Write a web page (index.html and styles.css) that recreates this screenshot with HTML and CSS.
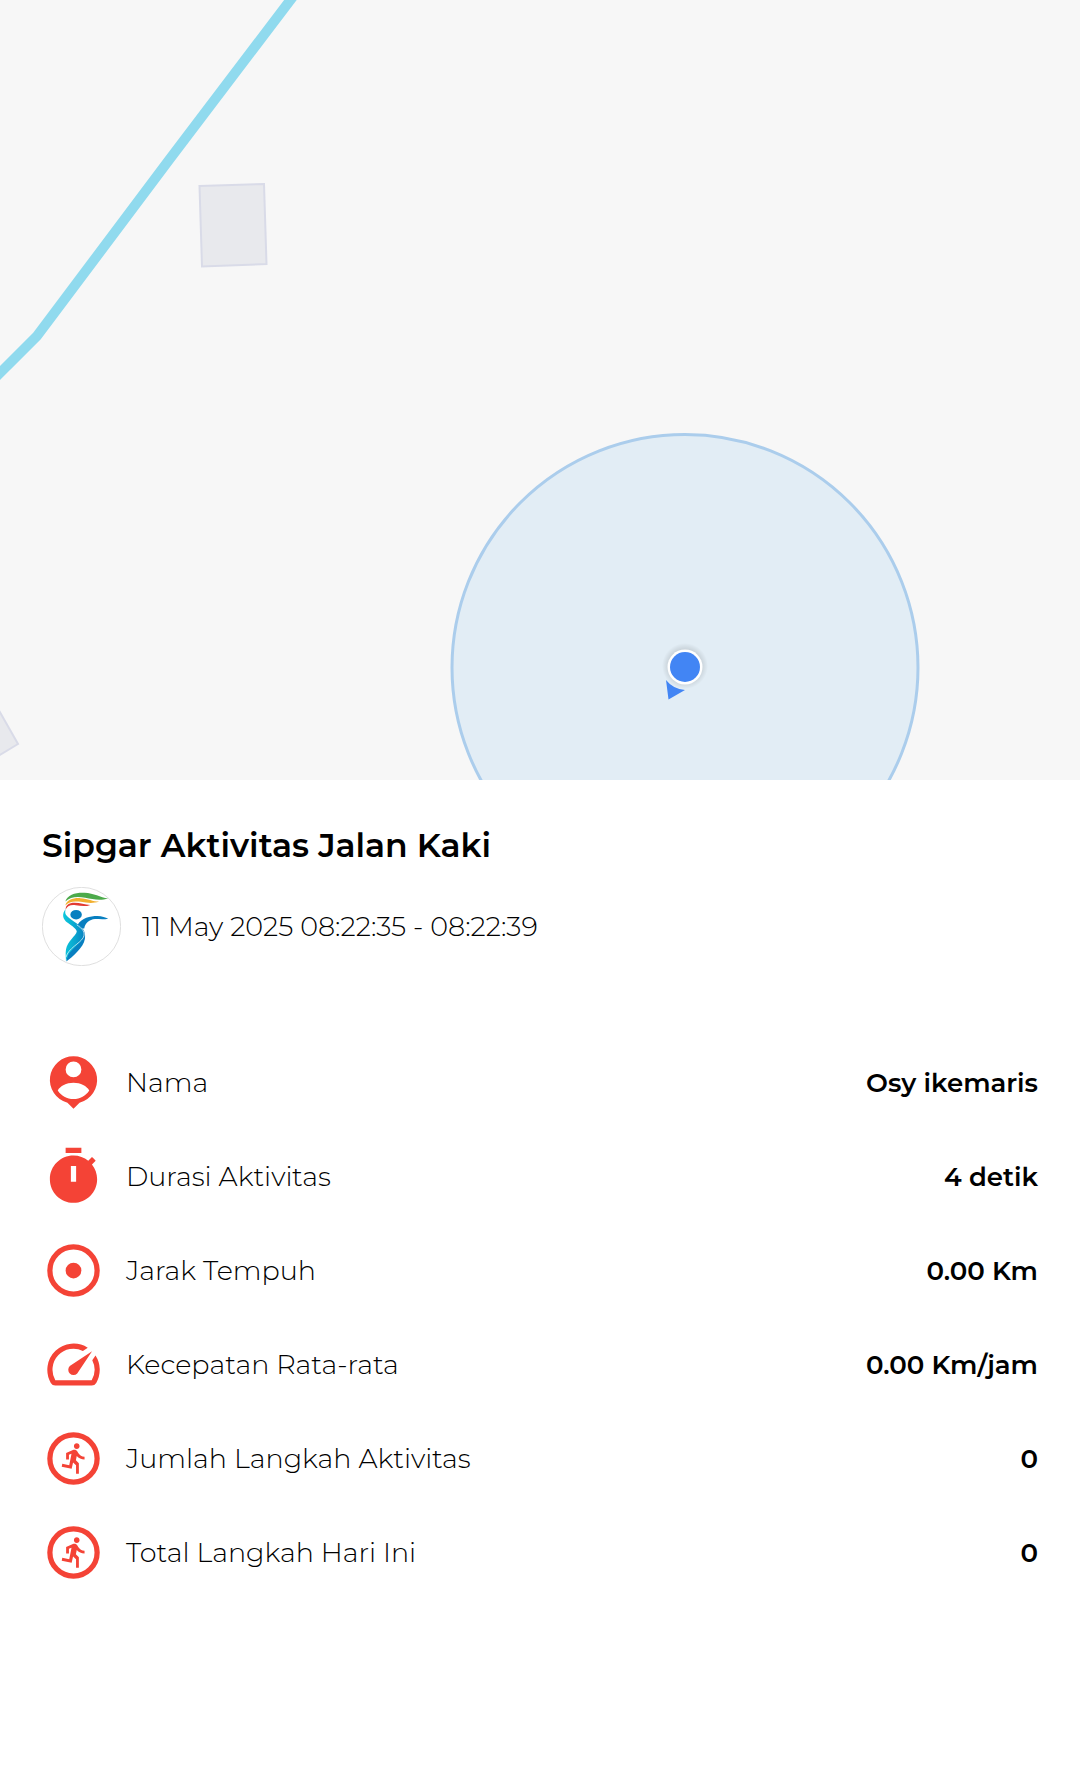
FILE: index.html
```html
<!DOCTYPE html>
<html lang="id">
<head>
    <meta charset="UTF-8">
    <meta name="viewport" content="width=device-width, initial-scale=1.0">
    <title>Sipgar Aktivitas Jalan Kaki</title>

    <link rel="stylesheet" href="styles.css">
</head>
<body>
    <svg class="map" viewBox="0 0 1080 780" preserveAspectRatio="xMidYMid slice" role="img" aria-label="Peta lokasi">
        <defs>
            <radialGradient id="glow">
                <stop offset="0.65" stop-color="#000" stop-opacity="0.14"/>
                <stop offset="1" stop-color="#000" stop-opacity="0"/>
            </radialGradient>
        </defs>
        <path class="river" d="M298 -10L169 160 37 336 -10 383"/>
        <path class="building" d="M199.5 186L264 184 266.5 264 202 266.5z"/>
        <path class="building" d="M-12 691L18 744 -12 762z"/>
        <circle class="accuracy" cx="685" cy="667.5" r="233"/>
        <circle cx="685" cy="666" r="23" fill="url(#glow)"/>
        <path class="dot" d="M666 680Q673 689 685 690L668.5 699.5z"/>
        <circle cx="685" cy="667" r="17.5" fill="#fff"/>
        <circle class="dot" cx="685" cy="667" r="15"/>
    </svg>

    <main class="content">
        <h1>Sipgar Aktivitas Jalan Kaki</h1>
        <div class="date">
            <svg class="logo" viewBox="18 24 234 234" aria-hidden="true">
                <defs>
                    <linearGradient id="body" x1="0" y1="0" x2="1" y2="0">
                        <stop offset="0" stop-color="#0cc9dc"/>
                        <stop offset="0.5" stop-color="#0aa9d0"/>
                        <stop offset="1" stop-color="#087fc0"/>
                    </linearGradient>
                </defs>
                <circle cx="135" cy="141" r="116" fill="#fff" stroke="#d0d0d0" stroke-width="2"/>
                <path fill="#4caa4b" d="M87 67C94 47 116 40 144 41C172 42 190 55 214 58C192 65 169 61 146 56C120 51 102 54 87 67z"/>
                <path fill="#f2b02f" d="M87 79C92 61 110 56 132 57C154 58 169 67 187 67C169 74 151 71 133 68C112 65 98 67 87 79z"/>
                <path fill="#e23b32" d="M88 91C88 78 98 71 114 71C132 71 144 77 161 77C147 83 133 80 118 78C102 76 94 80 88 91z"/>
                <ellipse cx="119" cy="106" rx="17" ry="14" fill="#087fc0"/>
                <path fill="url(#body)" d="M88 89C76 104 79 119 94 130C108 140 120 148 121 156C119 169 93 184 89 209C87 223 89 233 89 244L94 231C110 213 139 193 144 176C147 163 144 155 138 147C126 131 96 120 88 105C86 99 87 94 88 89z"/>
                <path fill="#087fc0" d="M124 135C136 116 160 110 182 110C196 110 206 115 214 118C200 121 188 119 175 119C158 121 147 129 143 147C137 149 131 139 124 135z"/>
                <path fill="#087fc0" d="M144 157C150 181 116 199 99 220C92 229 92 236 90 245C109 230 141 203 145 178C146 171 146 163 144 157z"/>
                <path fill="none" stroke="#fff" stroke-width="2" d="M121 136C137 147 148 158 140 174C130 192 96 205 89 232"/>
            </svg>
            <span>11 May 2025 08:22:35 - 08:22:39</span>
        </div>

        <dl class="stats">
            <div class="row">
                <dt>
                    <svg class="icon" viewBox="0 0 24 24" aria-hidden="true"><path d="M12 2a9 9 0 0 0-2.3 17.7L12 22l2.3-2.3A9 9 0 0 0 12 2zM12 4a3 3 0 1 1 0 6 3 3 0 0 1 0-6zM12 12.1c2.7 0 5.1 1.3 6 2.9-1.3 2-3.5 3.3-6 3.3S7.3 17 6 15c.9-1.6 3.3-2.9 6-2.9z"/></svg>
                    Nama
                </dt>
                <dd>Osy ikemaris</dd>
            </div>
            <div class="row">
                <dt>
                    <svg class="icon" viewBox="0 0 24 24" aria-hidden="true"><path d="M15 1H9v2h6V1zm-4 13h2V8h-2v6zm8.03-6.61l1.42-1.42c-.43-.51-.9-.99-1.41-1.41l-1.42 1.42C16.07 4.74 14.12 4 12 4c-4.97 0-9 4.03-9 9s4.02 9 9 9 9-4.03 9-9c0-2.12-.74-4.07-1.97-5.61z"/></svg>
                    Durasi Aktivitas
                </dt>
                <dd>4 detik</dd>
            </div>
            <div class="row">
                <dt>
                    <svg class="icon" viewBox="0 0 24 24" aria-hidden="true"><circle class="ring" cx="12" cy="12" r="9"/><circle cx="12" cy="12" r="3"/></svg>
                    Jarak Tempuh
                </dt>
                <dd>0.00 Km</dd>
            </div>
            <div class="row">
                <dt>
                    <svg class="icon" viewBox="0 0 24 24" aria-hidden="true"><path d="M20.38 8.57l-1.23 1.85a8 8 0 0 1-.22 7.58H5.07A8 8 0 0 1 15.58 6.85l1.85-1.23A10 10 0 0 0 3.35 19a2 2 0 0 0 1.72 1h13.85a2 2 0 0 0 1.74-1 10 10 0 0 0-.27-10.44zm-9.79 6.84a2 2 0 0 0 2.83 0l5.66-8.49-8.49 5.66a2 2 0 0 0 0 2.83z"/></svg>
                    Kecepatan Rata-rata
                </dt>
                <dd>0.00 Km/jam</dd>
            </div>
            <div class="row">
                <dt>
                    <svg class="icon" viewBox="0 0 24 24" aria-hidden="true">
                        <circle class="ring" cx="12" cy="12" r="9"/>
                        <path id="runner" transform="translate(12 12) scale(.54) translate(-11.2 -12.2)" d="M13.49 5.48c1.1 0 2-.9 2-2s-.9-2-2-2-2 .9-2 2 .9 2 2 2zm-3.6 13.9l1-4.4 2.1 2v6h2v-7.5l-2.1-2 .6-3c1.3 1.5 3.3 2.5 5.5 2.5v-2c-1.9 0-3.5-1-4.3-2.4l-1-1.6c-.4-.6-1-1-1.7-1-.3 0-.5.1-.8.1l-5.2 2.2v4.7h2v-3.4l1.8-.7-1.6 8.1-4.9-1-.4 2 7 1.4z"/>
                    </svg>
                    Jumlah Langkah Aktivitas
                </dt>
                <dd>0</dd>
            </div>
            <div class="row">
                <dt>
                    <svg class="icon" viewBox="0 0 24 24" aria-hidden="true"><circle class="ring" cx="12" cy="12" r="9"/><use href="#runner"/></svg>
                    Total Langkah Hari Ini
                </dt>
                <dd>0</dd>
            </div>
        </dl>
    </main>
</body>
</html>
```
FILE: styles.css
```css
* {
    box-sizing: border-box;
}

body {
    margin: 0;
    background-color: #fff;
    color: #000;
    font-family: Montserrat, Inter, sans-serif;
    font-size: 27px;
    line-height: 32px;
    font-weight: 300;
}

.map {
    display: block;
    width: 100%;
    aspect-ratio: 1080 / 780;
    background-color: #f7f7f7;
}

.river {
    fill: none;
    stroke: #90daee;
    stroke-width: 10;
}

.building {
    fill: #e8e9ed;
    stroke: #d9dbe8;
    stroke-width: 2;
}

.accuracy {
    fill: #e2edf5;
    stroke: #abcdec;
    stroke-width: 3;
}

.dot {
    fill: #4285f4;
}

.content {
    padding: 45px 42px;
}

h1 {
    margin: 0 0 22px;
    font-size: 33px;
    line-height: 40px;
    font-weight: 600;
}

.date {
    display: flex;
    align-items: center;
    gap: 21px;
}

.logo {
    width: 79px;
    height: 79px;
}

.stats {
    display: flex;
    flex-direction: column;
    gap: 31px;
    margin: 85px 0 0;
}

.row {
    display: flex;
    align-items: center;
    justify-content: space-between;
}

dt {
    display: flex;
    align-items: center;
    gap: 21px;
}

dd {
    margin: 0;
    font-size: 26px;
    font-weight: 600;
}

.icon {
    width: 63px;
    height: 63px;
    fill: #f44336;
    fill-rule: evenodd;
}

.ring {
    fill: none;
    stroke: #f44336;
    stroke-width: 2;
}
```
